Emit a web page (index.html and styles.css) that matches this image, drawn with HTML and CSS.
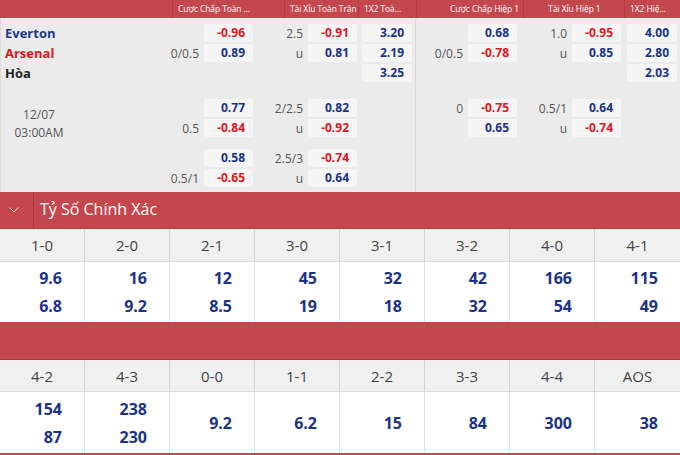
FILE: index.html
```html
<!DOCTYPE html>
<html lang="vi">
<head>
<meta charset="utf-8">
<title>Everton vs Arsenal</title>
<link rel="stylesheet" href="styles.css">
</head>
<body>
<div class="odds">
  <div class="odds-head">
    <div class="h"></div>
    <div class="h">Cược Chấp Toàn ...</div>
    <div class="h">Tài Xỉu Toàn Trận</div>
    <div class="h">1X2 Toà...</div>
    <div class="h h-right">Cược Chấp Hiệp 1</div>
    <div class="h h-center">Tài Xỉu Hiệp 1</div>
    <div class="h">1X2 Hiệ...</div>
  </div>
  <div class="odds-body">
    <div class="half half-left">
      <div class="block block-1">
        <div class="team team-home">Everton</div>
        <div class="cell cc"><span class="box neg">-0.96</span></div>
        <div class="cell tx"><span class="lbl">2.5</span><span class="box neg">-0.91</span></div>
        <div class="cell x12"><span class="box">3.20</span></div>
        <div class="team team-away">Arsenal</div>
        <div class="cell cc"><span class="lbl">0/0.5</span><span class="box">0.89</span></div>
        <div class="cell tx"><span class="lbl">u</span><span class="box">0.81</span></div>
        <div class="cell x12"><span class="box">2.19</span></div>
        <div class="team team-draw">Hòa</div>
        <div class="cell cc"></div>
        <div class="cell tx"></div>
        <div class="cell x12"><span class="box">3.25</span></div>
      </div>
      <div class="block block-2">
        <div class="date">12/07<br>03:00AM</div>
        <div class="cell cc"><span class="box">0.77</span></div>
        <div class="cell tx"><span class="lbl">2/2.5</span><span class="box">0.82</span></div>
        <div class="cell x12"></div>
        <div class="cell cc"><span class="lbl">0.5</span><span class="box neg">-0.84</span></div>
        <div class="cell tx"><span class="lbl">u</span><span class="box neg">-0.92</span></div>
        <div class="cell x12"></div>
      </div>
      <div class="block block-3">
        <div class="spacer"></div>
        <div class="cell cc"><span class="box">0.58</span></div>
        <div class="cell tx"><span class="lbl">2.5/3</span><span class="box neg">-0.74</span></div>
        <div class="cell x12"></div>
        <div class="cell cc"><span class="lbl">0.5/1</span><span class="box neg">-0.65</span></div>
        <div class="cell tx"><span class="lbl">u</span><span class="box">0.64</span></div>
        <div class="cell x12"></div>
      </div>
    </div>
    <div class="half half-right">
      <div class="block block-1">
        <div class="cell cc"><span class="box">0.68</span></div>
        <div class="cell tx"><span class="lbl">1.0</span><span class="box neg">-0.95</span></div>
        <div class="cell x12"><span class="box">4.00</span></div>
        <div class="cell cc"><span class="lbl">0/0.5</span><span class="box neg">-0.78</span></div>
        <div class="cell tx"><span class="lbl">u</span><span class="box">0.85</span></div>
        <div class="cell x12"><span class="box">2.80</span></div>
        <div class="cell cc"></div>
        <div class="cell tx"></div>
        <div class="cell x12"><span class="box">2.03</span></div>
      </div>
      <div class="block block-2">
        <div class="cell cc"><span class="lbl">0</span><span class="box neg">-0.75</span></div>
        <div class="cell tx"><span class="lbl">0.5/1</span><span class="box">0.64</span></div>
        <div class="cell x12"></div>
        <div class="cell cc"><span class="box">0.65</span></div>
        <div class="cell tx"><span class="lbl">u</span><span class="box neg">-0.74</span></div>
        <div class="cell x12"></div>
      </div>
    </div>
  </div>
</div>

<div class="cs">
  <div class="cs-bar">
    <div class="cs-toggle">
      <svg width="10" height="6" viewBox="0 0 10 6"><polyline points="0.5,0.5 5,5 9.5,0.5" fill="none" stroke="#f3d6d7" stroke-width="1"/></svg>
    </div>
    <div class="cs-title">Tỷ Số Chính Xác</div>
  </div>
  <div class="cs-grid">
    <div class="cs-h">1-0</div><div class="cs-h">2-0</div><div class="cs-h">2-1</div><div class="cs-h">3-0</div>
    <div class="cs-h">3-1</div><div class="cs-h">3-2</div><div class="cs-h">4-0</div><div class="cs-h">4-1</div>
    <div class="cs-v"><span>9.6</span><span>6.8</span></div>
    <div class="cs-v"><span>16</span><span>9.2</span></div>
    <div class="cs-v"><span>12</span><span>8.5</span></div>
    <div class="cs-v"><span>45</span><span>19</span></div>
    <div class="cs-v"><span>32</span><span>18</span></div>
    <div class="cs-v"><span>42</span><span>32</span></div>
    <div class="cs-v"><span>166</span><span>54</span></div>
    <div class="cs-v"><span>115</span><span>49</span></div>
  </div>
  <div class="cs-bar cs-bar-empty"></div>
  <div class="cs-grid cs-grid-2">
    <div class="cs-h">4-2</div><div class="cs-h">4-3</div><div class="cs-h">0-0</div><div class="cs-h">1-1</div>
    <div class="cs-h">2-2</div><div class="cs-h">3-3</div><div class="cs-h">4-4</div><div class="cs-h">AOS</div>
    <div class="cs-v"><span>154</span><span>87</span></div>
    <div class="cs-v"><span>238</span><span>230</span></div>
    <div class="cs-v"><span>9.2</span></div>
    <div class="cs-v"><span>6.2</span></div>
    <div class="cs-v"><span>15</span></div>
    <div class="cs-v"><span>84</span></div>
    <div class="cs-v"><span>300</span></div>
    <div class="cs-v"><span>38</span></div>
  </div>
</div>
</body>
</html>
```

FILE: styles.css
```css
* { box-sizing: border-box; }

html, body {
  margin: 0;
  padding: 0;
  background: #ffffff;
}

body {
  width: 680px;
  height: 455px;
  overflow: hidden;
  font-family: "Open Sans", "Noto Sans", sans-serif;
  color: #333;
}

/* ---------- Odds table ---------- */
.odds-head {
  display: grid;
  grid-template-columns: 172px 112px 74px 58px 107px 101px 56px;
  height: 18px;
  background: #c5474e;
  color: #fff;
  font-size: 8.5px;
  letter-spacing: -0.1px;
  line-height: 18px;
}

.h {
  padding: 0 4px 0 5px;
  white-space: nowrap;
  overflow: hidden;
  border-left: 1px solid #b8383f;
}

.h:first-child { border-left: none; }
.h-right { text-align: right; }
.h-center { text-align: center; }

.odds-body {
  display: flex;
  height: 174px;
  background: #ebebeb;
}

.half-left {
  width: 415px;
  border-left: 1px solid #dedede;
}

.half-right {
  width: 265px;
  border-left: 1px solid #d9d9d9;
}

.block {
  display: grid;
  grid-auto-rows: 18px;
  row-gap: 2px;
}

.half-left .block { grid-template-columns: 164px 88px 104px 58px; }
.half-right .block { grid-template-columns: 101px 104px 59px; }

.block-1 { margin-top: 6px; }
.block-2 { margin-top: 17px; }
.block-3 { margin-top: 12px; }

.spacer { grid-row: 1 / span 2; }

.team {
  padding-left: 4px;
  font-size: 13px;
  font-weight: 700;
  line-height: 19px;
}

.team-home { color: #1c368c; }
.team-away { color: #e2141c; }
.team-draw { color: #222; }

.date {
  grid-row: 1 / span 2;
  width: 76px;
  padding-top: 7px;
  text-align: center;
  font-size: 12px;
  line-height: 18px;
  color: #555;
}

.cell {
  display: flex;
  align-items: center;
  justify-content: flex-end;
  gap: 5px;
}

.half-left .x12 { padding-right: 3px; }
.half-right .x12 { padding-right: 3px; }

.lbl {
  font-size: 12px;
  color: #555;
}

.box {
  display: block;
  width: 49px;
  height: 18px;
  padding-right: 8px;
  border-radius: 2px;
  background: #f5f5f5;
  color: #1a3288;
  font-size: 12px;
  font-weight: 700;
  line-height: 18px;
  text-align: right;
}

.x12 .box { width: 50px; }
.box.neg { color: #e2161d; }

/* ---------- Correct score ---------- */
.cs-bar {
  display: flex;
  height: 37px;
  background: #c5474e;
  border-bottom: 1px solid #b03a40;
}

.cs-bar-empty { height: 38px; }

.cs-toggle {
  width: 34px;
  display: flex;
  align-items: center;
  justify-content: center;
  padding-right: 6px;
  border-right: 1px solid #a9353b;
}

.cs-title {
  padding-left: 6px;
  color: #fff;
  font-size: 16px;
  line-height: 34px;
}

.cs-grid {
  display: grid;
  grid-template-columns: repeat(8, 1fr);
  grid-template-rows: 33px 60px;
}

.cs-grid-2 {
  grid-template-rows: 32px 61px;
  border-bottom: 2px solid #c5474e;
}

.cs-h {
  background: #f0f0f0;
  border-right: 1px solid #d3d3d3;
  border-bottom: 1px solid #dcdcdc;
  color: #444;
  font-size: 15px;
  text-align: center;
  line-height: 32px;
}

.cs-v {
  display: flex;
  flex-direction: column;
  justify-content: center;
  align-items: flex-end;
  padding-right: 22px;
  background: #fff;
  border-right: 1px solid #e0e0e0;
  color: #1a3288;
  font-size: 16px;
  font-weight: 700;
  line-height: 28px;
}

.cs-h:nth-child(8), .cs-v:nth-child(16) { border-right: none; }
```
